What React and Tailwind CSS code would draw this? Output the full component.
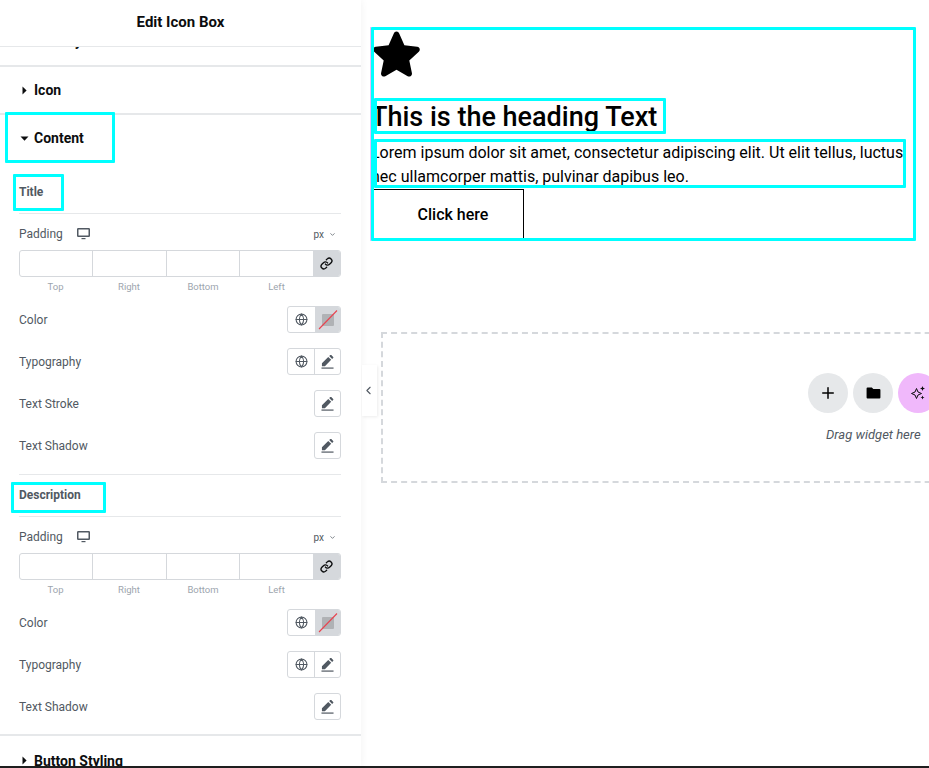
import { Globe, Link, ChevronDown, ChevronLeft, Plus } from "lucide-react";

const Caret = ({ open }) => (
  <div className="flex w-[9px] shrink-0 justify-center">
    {open ? (
      <svg width="9" height="5" viewBox="0 0 9 5">
        <path d="M0.5 0.5h8L4.5 4.8z" fill="#0c0d0e" />
      </svg>
    ) : (
      <svg width="5" height="9" viewBox="0 0 5 9">
        <path d="M0.5 0.5v8L4.6 4.5z" fill="#0c0d0e" />
      </svg>
    )}
  </div>
);

const Pencil = () => (
  <svg width="13" height="14" viewBox="0 0 14 15">
    <path d="M1 8.800 7.800 2l3.200 3.200L4.200 12H1z M8.800 1 10 0a.8.8 0 0 1 1.100 0l2 2a.8.8 0 0 1 0 1.100L12 4.200z" fill="#515962" />
    <rect x="0.500" y="13.400" width="13" height="1.300" fill="#515962" />
  </svg>
);

const DesktopIcon = () => (
  <svg width="13" height="12" viewBox="0 0 13 12" fill="none">
    <rect x="0.750" y="0.750" width="11.500" height="7.500" rx="0.500" stroke="#515962" strokeWidth="1.500" />
    <rect x="4.500" y="10" width="4" height="1.200" fill="#515962" />
  </svg>
);

const NoColor = () => (
  <div className="relative flex h-full w-[25px] items-center justify-center bg-[#d5d8dc]">
    <div className="h-3 w-3 rounded-[1px] bg-[#b0b2b5]" />
    <svg width="25" height="25" viewBox="0 0 25 25" className="absolute inset-0">
      <path d="M4 22 22 3.500" stroke="#e8434f" strokeWidth="1.100" fill="none" />
    </svg>
  </div>
);

const Segment = ({ children, last }) => (
  <div className={`flex h-full w-[27px] items-center justify-center ${last ? "" : "border-r border-[#d5d8dc]"}`}>
    {children}
  </div>
);

const ControlRow = ({ label, globe, swatch }) => (
  <div className="flex h-[42px] items-start justify-between pt-[7px]">
    <span className="self-center pb-[7px] text-xs text-[#515962]">{label}</span>
    <div className="flex h-[27px] overflow-hidden rounded-[3px] border border-[#d5d8dc]">
      {globe && (
        <Segment last={swatch}>
          <Globe size={13} color="#515962" strokeWidth={2} />
        </Segment>
      )}
      {swatch ? (
        <NoColor />
      ) : (
        <div className="flex h-full w-[25px] items-center justify-center">
          <Pencil />
        </div>
      )}
    </div>
  </div>
);

const PaddingControl = () => (
  <div>
    <div className="flex h-[32px] items-center justify-between">
      <div className="flex items-center gap-[14px]">
        <span className="text-xs text-[#515962]">Padding</span>
        <DesktopIcon />
      </div>
      <div className="flex items-center gap-[5px] pr-[5px] text-[10px] text-[#515962]">
        px
        <ChevronDown size={7} strokeWidth={2.500} />
      </div>
    </div>
    <div className="flex h-[27px] overflow-hidden rounded-[3px] border border-[#d5d8dc]">
      <div className="w-[73px] border-r border-[#d5d8dc]" />
      <div className="w-[74px] border-r border-[#d5d8dc]" />
      <div className="w-[73px] border-r border-[#d5d8dc]" />
      <div className="flex-1" />
      <div className="flex w-[27px] items-center justify-center bg-[#d5d8dc]">
        <Link size={13} color="#0c0d0e" strokeWidth={2.5} />
      </div>
    </div>
    <div className="flex pt-[3px] pr-[27px] text-[9.5px] leading-[14px] text-[#9da5ae]">
      <span className="w-[73px] text-center">Top</span>
      <span className="w-[74px] text-center">Right</span>
      <span className="w-[74px] text-center">Bottom</span>
      <span className="w-[73px] text-center">Left</span>
    </div>
  </div>
);

const SectionHead = ({ label, open, className }) => (
  <div className={`flex items-center gap-[5px] pl-[20px] text-sm font-bold text-[#0c0d0e] ${className}`}>
    <Caret open={open} />
    {label}
  </div>
);

const Annotation = ({ className }) => (
  <div className={`absolute rounded-[1px] border-[3px] border-[#00ffff] ${className}`} />
);

const Panel = () => (
  <aside className="relative z-10 flex h-full w-[361px] shrink-0 flex-col overflow-hidden bg-white shadow-[0_0_8px_rgba(0,0,0,0.06)]">
    <div className="relative z-10 flex h-[47px] shrink-0 items-center justify-center border-b border-[#e6e8ea] bg-white pb-[1px] text-[15px] font-bold text-[#0c0d0e]">
      Edit Icon Box
    </div>
    <div className="h-[20px] shrink-0 overflow-hidden border-b-2 border-[#e6e8ea]">
      <div className="-mt-[14px] pl-[34px] text-sm font-bold leading-[16px] text-[#0c0d0e]">Box Style</div>
    </div>
    <SectionHead label="Icon" className="h-[48px] shrink-0 border-b-2 border-[#e6e8ea]" />
    <SectionHead label="Content" open className="h-[48px] shrink-0 pb-[2px]" />

    <div className="pl-[19px] pr-[20px]">
      <div className="flex h-[51px] items-center border-b border-[#e6e8ea] pt-[8px] text-xs font-bold text-[#515962]">Title</div>
      <div className="pt-[4px]">
        <PaddingControl />
      </div>
      <div className="mt-[5px]">
        <ControlRow label="Color" globe swatch />
        <ControlRow label="Typography" globe />
        <ControlRow label="Text Stroke" />
        <ControlRow label="Text Shadow" />
      </div>
      <div className="mt-[7px] flex h-[43px] items-center border-y border-[#e6e8ea] pb-[2px] text-xs font-bold text-[#515962]">
        Description
      </div>
      <div className="pt-[4px]">
        <PaddingControl />
      </div>
      <div className="mt-[5px]">
        <ControlRow label="Color" globe swatch />
        <ControlRow label="Typography" globe />
        <ControlRow label="Text Shadow" />
      </div>
    </div>

    <SectionHead label="Button Styling" className="mt-[6px] h-[48px] shrink-0 border-t-2 border-[#e6e8ea] pt-[3px]" />

    <Annotation className="left-[5px] top-[112px] h-[51px] w-[110px]" />
    <Annotation className="left-[13px] top-[174px] h-[37px] w-[51px]" />
    <Annotation className="left-[11px] top-[482px] h-[31px] w-[95px]" />
  </aside>
);

const Star = () => (
  <svg width="47" height="47" viewBox="0 0 47 47">
    <path
      d="M23.500 0.600c1.300 0 2.200.8 2.700 1.900l5.200 11.800 12.800 1.400c2.500.3 3.500 3.300 1.600 5l-9.500 8.700 2.600 12.700c.5 2.500-2.100 4.300-4.200 3.100l-11.200-6.400-11.200 6.400c-2.100 1.200-4.700-.6-4.200-3.100l2.600-12.700-9.500-8.700c-1.900-1.700-.9-4.700 1.600-5l12.800-1.400 5.200-11.800c.5-1.100 1.400-1.900 2.700-1.900z"
      fill="#000"
    />
  </svg>
);

const Sparkle = () => (
  <svg width="16" height="16" viewBox="0 0 16 16" fill="none">
    <path d="M6.500 3.500 8 7l3.500 1.500L8 10l-1.500 3.500L5 10 1.500 8.500 5 7z" stroke="#0c0d0e" strokeWidth="1" strokeLinejoin="round" />
    <path d="M12.500 1l.7 1.800 1.800.7-1.800.7-.7 1.800-.7-1.800-1.800-.7 1.800-.7zM12.500 10.500l.6 1.400 1.400.6-1.400.6-.6 1.400-.6-1.400-1.400-.6 1.400-.6z" fill="#0c0d0e" />
  </svg>
);

const Folder = () => (
  <svg width="15" height="12" viewBox="0 0 16 13">
    <path d="M1.500 0.500h4.700l1.600 1.700h6.700c.6 0 1 .4 1 1v8.300c0 .6-.4 1-1 1H1.500c-.6 0-1-.4-1-1V1.500c0-.6.4-1 1-1z" fill="#000" />
  </svg>
);

const Canvas = () => (
  <main className="relative min-w-0 flex-1 overflow-hidden bg-white">
    <div className="absolute left-[1px] top-[365px] z-20 flex h-[51px] w-[15px] items-center justify-center bg-white pr-[2px] shadow-[1px_1px_3px_rgba(0,0,0,0.08)]">
      <ChevronLeft size={13} color="#515962" strokeWidth={2} />
    </div>

    <div className="ml-[9px] mt-[27px] w-[546px] border-l-[1px] border-[#f0b8fb]">
      <div className="relative h-[214px] pl-[3px] pt-[4px] text-black">
        <div className="-ml-[1px]">
          <Star />
        </div>
        <h2 className="-ml-[3px] mt-[21px] text-[27px] font-medium leading-[36px] text-black">
          This is the heading Text
        </h2>
        <p className="-ml-[3px] mt-[6px] h-[48px] w-[540px] whitespace-pre-line text-base leading-[24px]">
          {"Lorem ipsum dolor sit amet, consectetur adipiscing elit. Ut elit tellus, luctus\nnec ullamcorper mattis, pulvinar dapibus leo."}
        </p>
        <div className="flex h-[51px] w-[150px] items-center justify-center border-t border-r border-black pl-[9px] text-base font-medium">
          Click here
        </div>
        <Annotation className="left-0 top-0 h-[214px] w-[545px]" />
        <Annotation className="left-[3px] top-[71px] h-[36px] w-[292px]" />
        <Annotation className="left-[3px] top-[112px] h-[49px] w-[532px]" />
      </div>
    </div>

    <div className="ml-[20px] mt-[91px] flex h-[151px] w-[600px] flex-col border-2 border-dashed border-[#d5d8dc]">
      <div className="ml-[425px] mt-[39px] flex gap-[5px]">
        <div className="flex h-10 w-10 shrink-0 items-center justify-center rounded-full bg-[#e6e8ea]">
          <Plus size={18} color="#000" strokeWidth={2} />
        </div>
        <div className="flex h-10 w-10 shrink-0 items-center justify-center rounded-full bg-[#e6e8ea]">
          <Folder />
        </div>
        <div className="flex h-10 w-10 shrink-0 items-center justify-center rounded-full bg-[#f0b8fb]">
          <Sparkle />
        </div>
      </div>
      <div className="ml-[443px] mt-[12px] text-[13px] italic text-[#515962]">Drag widget here</div>
    </div>
  </main>
);

export default function App() {
  return (
    <div className="flex h-[768px] w-[929px] flex-col overflow-hidden bg-white font-['Roboto',sans-serif]">
      <div className="flex min-h-0 flex-1">
        <Panel />
        <Canvas />
      </div>
      <div className="h-[2px] shrink-0 bg-[#1f1f1f]" />
    </div>
  );
}
